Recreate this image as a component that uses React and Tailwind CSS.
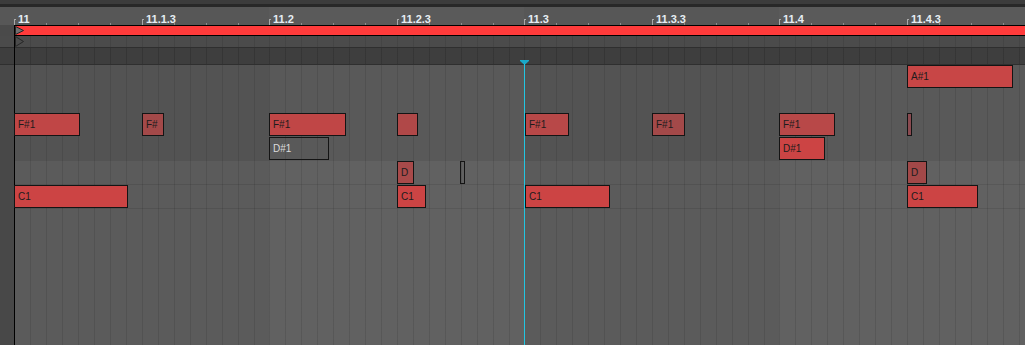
import React from "react";

const halfBeats = [
  { label: "11", w: "w-[128px]" },
  { label: "11.1.3", w: "w-[127px]" },
  { label: "11.2", w: "w-[128px]" },
  { label: "11.2.3", w: "w-[127px]" },
  { label: "11.3", w: "w-[128px]" },
  { label: "11.3.3", w: "w-[127px]" },
  { label: "11.4", w: "w-[128px]" },
  { label: "11.4.3", w: "flex-1" },
];

// x = left edge in page pixels, row = lane (24px each, from y 65)
const notes = [
  { x: 907, w: 106, row: 0, label: "A#1", c: "bg-[#c84646]" },
  { x: 14, w: 66, row: 2, label: "F#1", c: "bg-[#c04646]" },
  { x: 142, w: 22, row: 2, label: "F#", c: "bg-[#a34949]" },
  { x: 269, w: 77, row: 2, label: "F#1", c: "bg-[#c04646]" },
  { x: 397, w: 21, row: 2, label: "", c: "bg-[#b04848]" },
  { x: 525, w: 44, row: 2, label: "F#1", c: "bg-[#b84848]" },
  { x: 652, w: 33, row: 2, label: "F#1", c: "bg-[#a34949]" },
  { x: 779, w: 56, row: 2, label: "F#1", c: "bg-[#b84848]" },
  { x: 907, w: 5, row: 2, label: "", c: "bg-[#8a4a50]" },
  { x: 269, w: 60, row: 3, label: "D#1", muted: true },
  { x: 779, w: 46, row: 3, label: "D#1", c: "bg-[#cc4444]" },
  { x: 397, w: 17, row: 4, label: "D", c: "bg-[#a84a4a]" },
  { x: 460, w: 3, row: 4, label: "", muted: true },
  { x: 907, w: 20, row: 4, label: "D", c: "bg-[#a24848]" },
  { x: 14, w: 114, row: 5, label: "C1", c: "bg-[#cc4444]" },
  { x: 397, w: 29, row: 5, label: "C1", c: "bg-[#cc4444]" },
  { x: 525, w: 85, row: 5, label: "C1", c: "bg-[#cc4444]" },
  { x: 907, w: 71, row: 5, label: "C1", c: "bg-[#cc4444]" },
];

function Columns({ shaded, line = "rgba(0,0,0,0.1)" }) {
  const first =
    "w-[254px] shrink-0 h-full bg-[image:repeating-linear-gradient(90deg,transparent_0_15px,var(--ln)_15px_16px)]";
  const rest =
    "h-full bg-[image:repeating-linear-gradient(90deg,var(--ln)_0_1px,transparent_1px_16px)]";
  return (
    <div className="absolute inset-0 flex" style={{ "--ln": line }}>
      <div className={first} />
      <div className={`${rest} w-[255px] shrink-0 ${shaded ? "bg-white/[0.04]" : ""}`} />
      <div className={`${rest} w-[255px] shrink-0`} />
      <div className={`${rest} flex-1 ${shaded ? "bg-white/[0.04]" : ""}`} />
    </div>
  );
}

function Ruler() {
  return (
    <div className="flex h-[18px] bg-[#575757]">
      <div className="w-[14px] shrink-0" />
      {halfBeats.map((b, i) => (
        <div
          key={b.label}
          className={`relative h-full shrink-0 ${b.w} ${i % 4 >= 2 ? "bg-white/[0.02]" : ""}`}
        >
          <div className="absolute left-0 top-[12px] h-[6px] w-px bg-[#a9a9a9]" />
          <div className="absolute left-0 top-[12px] h-px w-[2px] bg-[#a9a9a9]" />
          <span className="absolute left-[4px] top-[7px] text-[11px] leading-none font-bold text-[#e6eef4] whitespace-nowrap">
            {b.label}
          </span>
          {[32, 64, 96].map((t) => (
            <div
              key={t}
              className="absolute bottom-0 h-[2px] w-px bg-[#8e8e8e]"
              style={{ left: t }}
            />
          ))}
        </div>
      ))}
    </div>
  );
}

function Marker({ fill }) {
  return (
    <svg width="10" height="11" viewBox="0 0 10 11" className="absolute left-[15px] top-0">
      <polygon points="0.5,0.5 8.5,5.5 0.5,10.5" fill={fill} stroke="#262626" strokeWidth="1" />
    </svg>
  );
}

function Note({ n }) {
  const style = { left: n.x, top: 29 + n.row * 24, width: n.w };
  return (
    <div
      className={`absolute h-[23px] border border-[#141414] flex items-center pl-[3px] overflow-hidden ${
        n.muted ? "bg-transparent text-[#dcdcdc]" : `${n.c} text-[#1c1c1c]`
      }`}
      style={style}
    >
      <span className="text-[10px] leading-none whitespace-nowrap">{n.label}</span>
    </div>
  );
}

export default function App() {
  return (
    <div className="relative w-[1025px] h-[345px] overflow-hidden bg-[#4a4a4a] font-['Liberation_Sans',Arial,sans-serif] select-none">
      <div className="h-[4px] bg-[#3c3c3c]" />
      <div className="h-[3px] bg-[#282828]" />
      <Ruler />

      {/* loop brace */}
      <div className="flex h-[11px]">
        <div className="w-[14px] shrink-0 bg-[#4a4a4a]" />
        <div className="relative flex-1 border-y border-l border-black bg-[#ff3b3b]">
          <svg width="10" height="10" viewBox="0 0 10 10" className="absolute left-0 top-0">
            <polygon points="0.5,0.5 8.5,4.5 0.5,8.5" fill="#707070" stroke="#262626" strokeWidth="1" />
          </svg>
        </div>
      </div>

      {/* lanes */}
      <div className="relative flex h-[310px]">
        <div className="w-[14px] shrink-0 flex flex-col">
          <div className="h-[11px] bg-[#4b4b4b]" />
          <div className="h-[18px] border-y border-[#2f2f2f] bg-[#3e3e3e]" />
          <div className="flex-1 bg-[#484848]" />
        </div>
        <div className="w-px shrink-0 bg-black" />
        <div className="flex-1 flex flex-col">
          <div className="relative h-[11px] bg-[#4b4b4b]">
            <Columns line="rgba(0,0,0,0.09)" />
          </div>
          <div className="relative h-[18px] border-y border-[#2f2f2f] bg-[#3e3e3e]">
            <Columns line="rgba(0,0,0,0.14)" />
          </div>
          <div className="relative flex-1 flex flex-col">
            <div className="h-[96px] bg-[#535353]" />
            <div className="h-[24px] border-b border-[#525252] bg-[#5b5b5b]" />
            <div className="h-[24px] border-b border-[#525252] bg-[#5b5b5b]" />
            <div className="flex-1 bg-[#5b5b5b]" />
            <Columns shaded />
          </div>
        </div>

        <Marker fill="#4b4b4b" />

        {notes.map((n, i) => (
          <Note key={i} n={n} />
        ))}

        {/* playhead */}
        <div className="absolute left-[520px] top-[24px] flex flex-col items-center w-[9px]">
          <svg width="9" height="5" viewBox="0 0 9 5">
            <polygon points="0,0 9,0 9,1 4.5,5 0,1" fill="#1aa9c9" />
          </svg>
        </div>
        <div className="absolute left-[524px] top-[28px] bottom-0 w-px bg-[#22c6e2]" />
      </div>
    </div>
  );
}
